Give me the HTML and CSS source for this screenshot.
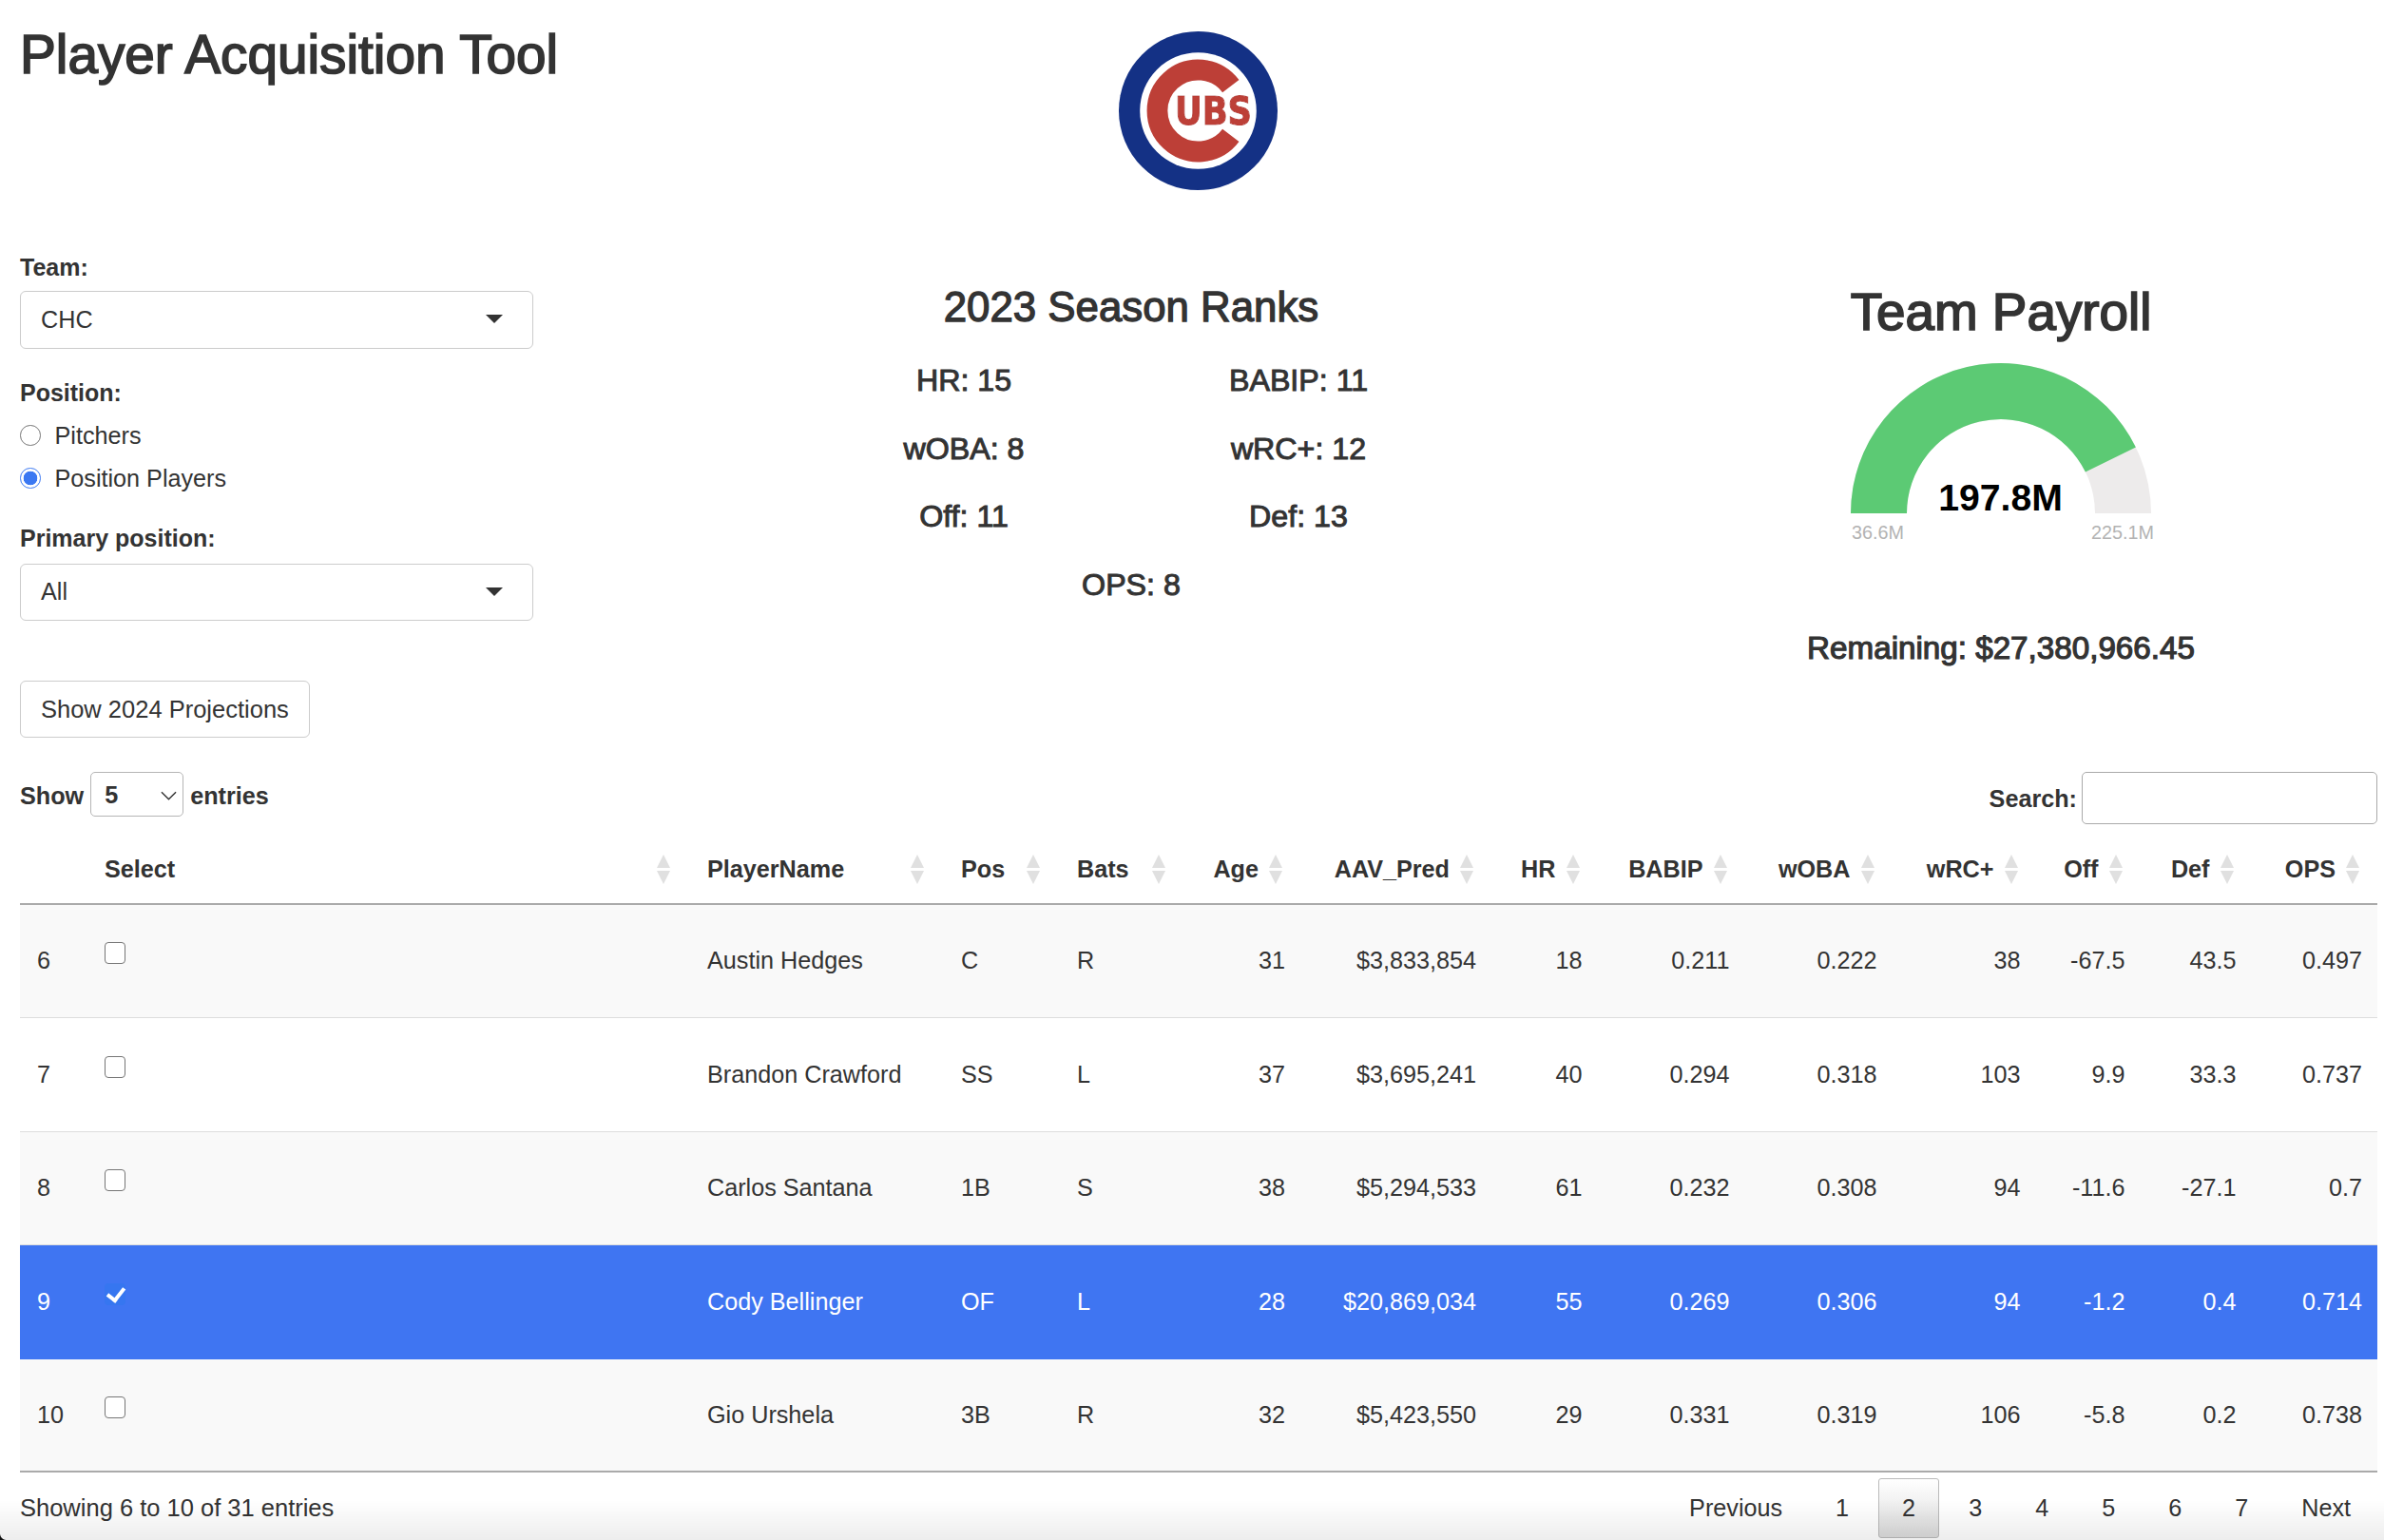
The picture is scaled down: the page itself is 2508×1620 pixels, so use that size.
FILE: index.html
```html
<!DOCTYPE html>
<html lang="en">
<head>
<meta charset="utf-8">
<title>Player Acquisition Tool</title>
<link rel="stylesheet" href="styles.css">
</head>
<body>
<header class="top">
  <h1 class="title">Player Acquisition Tool</h1>
  <svg class="logo" viewBox="0 0 167 167" role="img" aria-label="Chicago Cubs logo">
    <defs>
      <filter id="halo" x="-10%" y="-20%" width="120%" height="140%">
        <feMorphology in="SourceAlpha" operator="dilate" radius="2" result="grown"/>
        <feFlood flood-color="#fff"/>
        <feComposite in2="grown" operator="in"/>
        <feMerge><feMergeNode/><feMergeNode in="SourceGraphic"/></feMerge>
      </filter>
    </defs>
    <circle cx="83.5" cy="83.5" r="83.5" fill="#143185"/>
    <circle cx="83.5" cy="83.5" r="61.3" fill="#fff"/>
    <path d="M117.8 57.6A43 43 0 1 0 117.8 109.4" fill="none" stroke="#bd3f37" stroke-width="21.8"/>
    <text class="logo-text" x="59" y="98" textLength="81" lengthAdjust="spacingAndGlyphs" filter="url(#halo)">UBS</text>
  </svg>
</header>

<section class="panels">
  <div class="filters">
    <label class="field-label">Team:</label>
    <div class="selectbox"><span>CHC</span><i class="caret"></i></div>
    <label class="field-label second">Position:</label>
    <div class="radios">
      <label class="radio"><input type="radio" name="pos"><span>Pitchers</span></label>
      <label class="radio"><input type="radio" name="pos" checked><span>Position Players</span></label>
    </div>
    <label class="field-label third">Primary position:</label>
    <div class="selectbox"><span>All</span><i class="caret"></i></div>
    <button class="btn" type="button">Show 2024 Projections</button>
  </div>

  <div class="ranks">
    <h2 class="ranks-title">2023 Season Ranks</h2>
    <div class="ranks-grid">
      <div>HR: 15</div><div>BABIP: 11</div>
      <div>wOBA: 8</div><div>wRC+: 12</div>
      <div>Off: 11</div><div>Def: 13</div>
      <div class="wide">OPS: 8</div>
    </div>
  </div>

  <div class="payroll">
    <h2 class="payroll-title">Team Payroll</h2>
    <svg class="gauge" viewBox="0 0 340 200" role="img" aria-label="Team payroll gauge">
      <path d="M12 160A158 158 0 0 1 328 160H269A99 99 0 0 0 71 160Z" fill="#edebeb"/>
      <path d="M12 160A158 158 0 0 1 311.9 90.5L258.9 116.5A99 99 0 0 0 71 160Z" fill="#5cca74"/>
      <text class="gauge-value" x="169.5" y="156.7">197.8M</text>
      <text class="gauge-min" x="13" y="187">36.6M</text>
      <text class="gauge-max" x="331" y="187">225.1M</text>
    </svg>
    <div class="remaining">Remaining: $27,380,966.45</div>
  </div>
</section>

<section class="table-area">
  <div class="controls">
    <div class="length">
      <span>Show</span>
      <div class="length-select">
        <select><option>5</option></select>
        <svg class="chevron" viewBox="0 0 18 10"><path d="M1 1L9 9L17 1" fill="none" stroke="#333" stroke-width="1.5"/></svg>
      </div>
      <span>entries</span>
    </div>
    <label class="search"><span>Search:</span><input type="search"></label>
  </div>

  <table class="players">
    <colgroup>
      <col class="c-idx"><col class="c-sel"><col class="c-name"><col class="c-pos"><col class="c-bats"><col class="c-age"><col class="c-aav"><col class="c-hr"><col class="c-babip"><col class="c-woba"><col class="c-wrc"><col class="c-off"><col class="c-def"><col class="c-ops">
    </colgroup>
    <thead>
      <tr>
        <th></th>
        <th class="l">Select<i class="sort"></i></th>
        <th class="l">PlayerName<i class="sort"></i></th>
        <th class="l">Pos<i class="sort"></i></th>
        <th class="l bats">Bats<i class="sort"></i></th>
        <th>Age<i class="sort"></i></th>
        <th>AAV_Pred<i class="sort"></i></th>
        <th>HR<i class="sort"></i></th>
        <th>BABIP<i class="sort"></i></th>
        <th>wOBA<i class="sort"></i></th>
        <th>wRC+<i class="sort"></i></th>
        <th>Off<i class="sort"></i></th>
        <th>Def<i class="sort"></i></th>
        <th>OPS<i class="sort"></i></th>
      </tr>
    </thead>
    <tbody>
      <tr class="odd">
        <td class="idx">6</td><td class="l"><input class="cb" type="checkbox"></td><td class="l">Austin Hedges</td><td class="l">C</td><td class="l">R</td>
        <td>31</td><td>$3,833,854</td><td>18</td><td>0.211</td><td>0.222</td><td>38</td><td>-67.5</td><td>43.5</td><td>0.497</td>
      </tr>
      <tr>
        <td class="idx">7</td><td class="l"><input class="cb" type="checkbox"></td><td class="l">Brandon Crawford</td><td class="l">SS</td><td class="l">L</td>
        <td>37</td><td>$3,695,241</td><td>40</td><td>0.294</td><td>0.318</td><td>103</td><td>9.9</td><td>33.3</td><td>0.737</td>
      </tr>
      <tr class="odd">
        <td class="idx">8</td><td class="l"><input class="cb" type="checkbox"></td><td class="l">Carlos Santana</td><td class="l">1B</td><td class="l">S</td>
        <td>38</td><td>$5,294,533</td><td>61</td><td>0.232</td><td>0.308</td><td>94</td><td>-11.6</td><td>-27.1</td><td>0.7</td>
      </tr>
      <tr class="selected">
        <td class="idx">9</td><td class="l"><input class="cb" type="checkbox" checked></td><td class="l">Cody Bellinger</td><td class="l">OF</td><td class="l">L</td>
        <td>28</td><td>$20,869,034</td><td>55</td><td>0.269</td><td>0.306</td><td>94</td><td>-1.2</td><td>0.4</td><td>0.714</td>
      </tr>
      <tr class="odd">
        <td class="idx">10</td><td class="l"><input class="cb" type="checkbox"></td><td class="l">Gio Urshela</td><td class="l">3B</td><td class="l">R</td>
        <td>32</td><td>$5,423,550</td><td>29</td><td>0.331</td><td>0.319</td><td>106</td><td>-5.8</td><td>0.2</td><td>0.738</td>
      </tr>
    </tbody>
  </table>

  <div class="table-foot">
    <div class="info">Showing 6 to 10 of 31 entries</div>
    <nav class="pager">
      <a class="page">Previous</a><a class="page">1</a><a class="page current">2</a><a class="page">3</a><a class="page">4</a><a class="page">5</a><a class="page">6</a><a class="page">7</a><a class="page">Next</a>
    </nav>
  </div>
</section>
<div class="window-shade"></div>
</body>
</html>
```
FILE: styles.css
```css
* { box-sizing: border-box; }
html, body { margin: 0; height: 1620px; overflow: hidden; }
body {
  padding: 0 7px 0 21px;
  background: #fff;
  color: #333;
  font-family: "Liberation Sans", Arial, sans-serif;
  font-size: 25.2px;
  line-height: 29px;
}

/* top */
.top { display: flex; height: 265.5px; padding-top: 30px; }
.title {
  width: 1156px; height: 60px; margin: 0;
  font-size: 56.7px; line-height: 56px; font-weight: 400;
  -webkit-text-stroke: 1.7px #333;
}
.logo { width: 167px; height: 167px; flex: none; margin-top: 3px; }
.logo-text {
  font-family: "DejaVu Sans", sans-serif; font-weight: 700; font-size: 41px;
  fill: #bd3f37; stroke: #bd3f37; stroke-width: 1.2px; stroke-linejoin: miter;
}

/* panels */
.panels { display: flex; height: 510.5px; }
.filters { width: 540px; flex: none; display: flex; flex-direction: column; align-items: flex-start; }
.field-label { display: block; height: 30px; margin-bottom: 10.5px; font-size: 25px; line-height: 30px; font-weight: 700; }
.field-label.second { margin-top: 31.5px; margin-bottom: 7.5px; }
.field-label.third { margin-top: 25.5px; margin-bottom: 11.5px; }
.selectbox {
  position: relative; width: 540px; height: 60.5px; padding: 0 21px; display: flex; align-items: center;
  border: 1.6px solid #ccc; border-radius: 6px; background: #fff;
}
.caret {
  position: absolute; right: 31px; top: 24px; width: 0; height: 0;
  border-style: solid; border-width: 9px 9px 0; border-color: #333 transparent transparent;
}
.radios { display: flex; flex-direction: column; }
.radio { display: flex; align-items: center; height: 45px; gap: 15px; }
.radio input {
  appearance: none; width: 21.5px; height: 21.5px; margin: 0; border: 1.6px solid #767676; border-radius: 50%; background: #fff;
}
.radio input:checked { border-color: #3b78f2; background: radial-gradient(circle, #3b78f2 0 7px, #fff 7.6px); }
.btn {
  margin-top: 63px; height: 60px; padding: 0 21px;
  border: 1.6px solid #ccc; border-radius: 6px; background: #fff; color: #333;
  font: inherit; font-size: 25.5px; line-height: 29px;
}

.ranks { width: 704px; flex: none; margin-left: 277px; padding-top: 32.5px; }
.ranks-title { margin: 0 0 32px; text-align: center; font-size: 43.8px; line-height: 50px; font-weight: 400; -webkit-text-stroke: 1.3px #333; }
.ranks-grid {
  display: grid; grid-template-columns: 1fr 1fr; grid-auto-rows: 71.5px; text-align: center;
  font-size: 32.2px; line-height: 40px; -webkit-text-stroke: 1px #333;
}
.ranks-grid .wide { grid-column: 1 / -1; }

.payroll { width: 794px; flex: none; margin-left: 166px; padding-top: 31px; display: flex; flex-direction: column; align-items: center; }
.payroll-title { margin: 0; height: 83.5px; font-size: 54.8px; line-height: 62px; font-weight: 400; -webkit-text-stroke: 1.7px #333; }
.gauge { width: 340px; height: 200px; flex: none; }
.gauge-value { font-size: 39.2px; font-weight: 700; fill: #000; text-anchor: middle; }
.gauge-min, .gauge-max { font-size: 19.8px; fill: #b3b3b3; }
.gauge-max { text-anchor: end; }
.remaining { margin-top: 82px; font-size: 33.2px; line-height: 40px; -webkit-text-stroke: 1.2px #333; }

/* table */
.table-area { padding-top: 36px; }
.controls { display: flex; justify-content: space-between; align-items: flex-start; height: 55px; font-weight: 700; }
.length { display: flex; align-items: center; height: 47px; gap: 7px; }
.length > span { padding-top: 3px; }
.length-select { position: relative; width: 98px; height: 47px; }
.length-select select {
  appearance: none; width: 100%; height: 100%; padding: 0 0 0 14px;
  border: 1.6px solid #b5b5b5; border-radius: 5px; background: #fff; color: #333; font: 700 25.2px "Liberation Sans", Arial, sans-serif;
}
.chevron { position: absolute; right: 7px; top: 20px; width: 17px; height: 10px; }
.search { display: flex; align-items: center; height: 55px; gap: 5px; }
.search > span { padding-top: 2px; }
.search input {
  appearance: none; width: 311px; height: 55px; padding: 0 8px;
  border: 1.6px solid #aaa; border-radius: 5px; background: #fff;
}

.players { width: 2480px; table-layout: fixed; border-collapse: separate; border-spacing: 0; }
.c-idx { width: 73px; } .c-sel { width: 634px; } .c-name { width: 267px; } .c-pos { width: 122px; } .c-bats { width: 128px; }
.c-age { width: 123px; } .c-aav { width: 201px; } .c-hr { width: 111.5px; } .c-babip { width: 155px; } .c-woba { width: 155px; }
.c-wrc { width: 151px; } .c-off { width: 110px; } .c-def { width: 117px; } .c-ops { width: 132.5px; }
.players th {
  position: relative; height: 84.5px; padding: 0 44px 20.5px 0; vertical-align: bottom; text-align: right;
  border-bottom: 2px solid #aaa; font-weight: 700; white-space: nowrap;
}
.players th.l { text-align: left; padding-left: 16px; padding-right: 0; }
.players td {
  height: 119.6px; padding: 0 16px; text-align: right; vertical-align: middle; white-space: nowrap;
  border-bottom: 1.6px solid #ddd;
}
.players td.l { text-align: left; }
.players td.idx { text-align: left; padding-left: 18px; padding-right: 0; }
.players tbody tr:last-child td { border-bottom: 2px solid #aaa; }
.players tr.odd td { background: #f9f9f9; }
.players tr.selected td { background: #3f75f2; color: #fff; border-bottom-color: #3f75f2; }
.sort { position: absolute; right: 19px; top: 32px; width: 14px; height: 31px; }
.players th.l .sort { right: 23px; }
.players th.bats .sort { right: 19px; }
.sort::before, .sort::after {
  content: ""; position: absolute; left: 0; width: 0; height: 0; border-style: solid;
}
.sort::before { top: 0; border-width: 0 7px 14px; border-color: transparent transparent #e0e0e0; }
.sort::after { bottom: 0; border-width: 14px 7px 0; border-color: #e0e0e0 transparent transparent; }
.cb {
  appearance: none; position: relative; display: block; width: 22px; height: 23px; margin: 0 0 16px;
  border: 1.6px solid #767676; border-radius: 4px; background: #fff;
}
.cb:checked { border: 0; background: #3676f0; }
.cb:checked::after {
  content: ""; position: absolute; left: 6px; top: 1px; width: 8px; height: 14px;
  border: solid #fff; border-width: 0 4px 4px 0; transform: rotate(38deg);
}

.table-foot { display: flex; justify-content: space-between; align-items: flex-start; padding-top: 6px; }
.info { height: 63px; line-height: 63px; font-size: 25.5px; }
.pager { display: flex; gap: 6px; margin-right: 3px; }
.page {
  display: flex; align-items: center; justify-content: center; height: 63px; padding: 0 24px;
  border: 1.6px solid transparent; border-radius: 3px; color: #333;
}
.page.current { border-color: #bbb; background: linear-gradient(#fff, #dcdcdc); }
.window-shade {
  position: fixed; left: 0; right: 0; bottom: 0; height: 42px; pointer-events: none;
  background: linear-gradient(rgba(0,0,0,0), rgba(0,0,0,.07));
}
.window-shade::before {
  content: ""; position: absolute; left: 0; bottom: 0; width: 7px; height: 7px;
  background: radial-gradient(circle at 100% 0, transparent 6.5px, #111 7.5px);
}
```
